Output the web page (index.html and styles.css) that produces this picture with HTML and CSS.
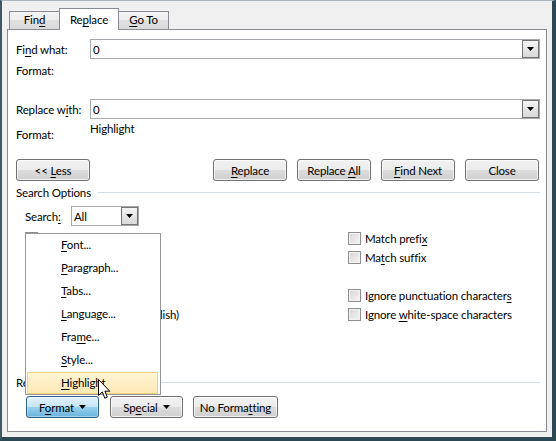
FILE: index.html
```html
<!DOCTYPE html>
<html>
<head>
<meta charset="utf-8">
<link rel="stylesheet" href="styles.css">
</head>
<body>
<div class="window">
  <div class="tabs">
    <div class="tab">Fin<u>d</u></div>
    <div class="tab active">Re<u>p</u>lace</div>
    <div class="tab"><u>G</u>o To</div>
  </div>
  <div class="panel">
    <div class="field">
      <span class="lbl">Fi<u>n</u>d what:</span>
      <div class="combo"><span class="val">0</span><span class="drop"><svg width="7" height="4" viewBox="0 0 7 4"><polygon points="0,0 7,0 3.5,4" fill="#000"/></svg></span></div>
    </div>
    <div class="fmt-row"><span class="lbl">Format:</span></div>
    <div class="field replace-field">
      <span class="lbl">Replace w<u>i</u>th:</span>
      <div class="combo"><span class="val">0</span><span class="drop"><svg width="7" height="4" viewBox="0 0 7 4"><polygon points="0,0 7,0 3.5,4" fill="#000"/></svg></span></div>
    </div>
    <div class="fmt-row2"><span class="lbl lbl-low">Format:</span><span class="fmt-val">Highlight</span></div>
    <div class="btn-row">
      <button class="btn less"><span>&lt;&lt; <u>L</u>ess</span></button>
      <button class="btn"><span><u>R</u>eplace</span></button>
      <button class="btn"><span>Replace <u>A</u>ll</span></button>
      <button class="btn"><span><u>F</u>ind Next</span></button>
      <button class="btn"><span>Close</span></button>
    </div>
    <div class="group-title"><span>Search Options</span><span class="rule"></span></div>
    <div class="search-row">
      <span class="search-lbl">Search<u>:</u></span>
      <div class="combo small"><span class="val">All</span><span class="drop"><svg width="7" height="4" viewBox="0 0 7 4"><polygon points="0,0 7,0 3.5,4" fill="#000"/></svg></span></div>
    </div>
    <div class="options">
      <div class="col">
        <div class="cb"><span class="box"></span><span class="cb-text">Matc<u>h</u> case</span></div>
        <div class="cb"><span class="box"></span><span class="cb-text">Find wh<u>o</u>le words only</span></div>
        <div class="cb"><span class="box"></span><span class="cb-text"><u>U</u>se wildcards</span></div>
        <div class="cb"><span class="box"></span><span class="cb-text">Sounds li<u>k</u>e (English)</span></div>
        <div class="cb"><span class="box"></span><span class="cb-text">Find all <u>w</u>ord forms (English)</span></div>
      </div>
      <div class="col">
        <div class="cb"><span class="box"></span><span class="cb-text">Match prefi<u>x</u></span></div>
        <div class="cb"><span class="box"></span><span class="cb-text">Ma<u>t</u>ch suffix</span></div>
        <div class="cb"></div>
        <div class="cb"><span class="box"></span><span class="cb-text">Ignore punctuation character<u>s</u></span></div>
        <div class="cb"><span class="box"></span><span class="cb-text">Ignore <u>w</u>hite-space characters</span></div>
      </div>
    </div>
    <div class="group-title replace-title"><span>Replace</span><span class="rule"></span></div>
    <div class="bottom-row">
      <button class="btn pressed fmt-btn"><span>F<u>o</u>rmat</span><svg width="7" height="4" viewBox="0 0 7 4"><polygon points="0,0 7,0 3.5,4" fill="#000"/></svg></button>
      <button class="btn special-btn"><span>Sp<u>e</u>cial</span><svg width="7" height="4" viewBox="0 0 7 4"><polygon points="0,0 7,0 3.5,4" fill="#000"/></svg></button>
      <button class="btn nofmt-btn"><span>No Forma<u>t</u>ting</span></button>
    </div>
  </div>

  <div class="menu">
    <div class="item"><u>F</u>ont...</div>
    <div class="item"><u>P</u>aragraph...</div>
    <div class="item"><u>T</u>abs...</div>
    <div class="item"><u>L</u>anguage...</div>
    <div class="item">Fra<u>m</u>e...</div>
    <div class="item"><u>S</u>tyle...</div>
    <div class="item hot"><u>H</u>ighlight</div>
  </div>

  <svg class="cursor" width="13" height="21" viewBox="0 0 13 21">
    <path d="M0.5 0.5 L0.5 16.5 L4.3 12.9 L6.8 19.2 L9.3 18.2 L6.9 12.2 L11.8 12.2 Z" fill="#fff" stroke="#000" stroke-width="1" stroke-linejoin="miter"/>
  </svg>
</div>
</body>
</html>
```

FILE: styles.css
```css
body {
  margin: 0;
  font-family: "Lato", "Noto Sans", sans-serif;
  font-size: 11.5px;
  letter-spacing: -0.15px;
  line-height: 15px;
  color: #000;
}

u {
  text-decoration-thickness: 1px;
  text-underline-offset: 2px;
}

.window {
  position: relative;
  width: 556px;
  height: 441px;
  box-sizing: border-box;
  background: #f0f0f0;
  border-style: solid;
  border-width: 1px 4px 4px 2px;
  border-color: #a9b8c0 #2b4853 #2b4853 #3d5a65;
  overflow: hidden;
}

/* tabs */
.tabs {
  display: flex;
  align-items: flex-end;
  padding: 7px 0 0 7px;
}

.tab {
  width: 51px;
  height: 18px;
  box-sizing: border-box;
  border: 1px solid #898c95;
  border-bottom: none;
  margin-right: -1px;
  background: linear-gradient(#f3f3f3 0%, #ededed 50%, #e0e0e0 50%, #d9d9d9 100%);
  text-align: center;
  line-height: 16px;
  white-space: nowrap;
}

.tab.active {
  width: 60px;
  height: 22px;
  margin-bottom: -1px;
  padding-top: 3px;
  background: #fff;
  position: relative;
  z-index: 1;
}

/* panel */
.panel {
  margin-left: 5px;
  width: 540px;
  height: 403px;
  box-sizing: border-box;
  border: 1px solid #898c95;
  background: #fff;
  padding: 9px 6px 0 8px;
}

.field {
  display: flex;
  align-items: center;
  height: 20px;
}

.lbl {
  width: 74px;
  flex: none;
  white-space: nowrap;
}

.combo {
  flex: 1;
  height: 20px;
  box-sizing: border-box;
  border: 1px solid #a7a9ae;
  display: flex;
  align-items: center;
  padding-left: 2px;
  background: #fff;
}

.combo .val {
  flex: 1;
}

.drop {
  width: 17px;
  height: 18px;
  box-sizing: border-box;
  border: 1px solid #737373;
  background: linear-gradient(#f4f4f4, #e6e6e6 50%, #d9d9d9);
  display: flex;
  align-items: center;
  justify-content: center;
  flex: none;
}

.fmt-row {
  margin-top: 4px;
  height: 15px;
  display: flex;
}

.replace-field {
  margin-top: 21px;
}

.fmt-row2 {
  margin-top: 2px;
  display: flex;
  align-items: flex-start;
}

.lbl-low {
  padding-top: 6px;
}

/* buttons */
.btn-row {
  margin-top: 17px;
  display: flex;
  gap: 10px;
  margin-right: 1px;
}

.btn {
  font-family: inherit;
  font-size: inherit;
  letter-spacing: inherit;
  line-height: 15px;
  color: #000;
  height: 22px;
  width: 74px;
  padding: 0;
  box-sizing: border-box;
  border: 1px solid #707070;
  border-radius: 3px;
  background: linear-gradient(#f2f2f2 0%, #ebebeb 50%, #dddddd 50%, #cfcfcf 100%);
  box-shadow: inset 0 0 0 1px rgba(255, 255, 255, 0.7);
  display: flex;
  align-items: center;
  justify-content: center;
  gap: 5px;
  white-space: nowrap;
}

.btn.less {
  margin-right: auto;
}

.btn.pressed {
  border-color: #2c628b;
  background: linear-gradient(#e5f4fc 0%, #c4e5f6 50%, #98d1ef 50%, #68b3db 100%);
  box-shadow: inset 0 0 0 1px rgba(255, 255, 255, 0.35);
}

.fmt-btn { width: 73px; }
.special-btn { width: 73px; }
.nofmt-btn { width: 85px; margin-left: -1px; }

/* groups */
.group-title {
  margin-top: 4px;
  display: flex;
  align-items: center;
  height: 15px;
  white-space: nowrap;
}

.rule {
  flex: 1;
  height: 1px;
  background: #d5dfe5;
  margin-left: 7px;
}

.search-row {
  margin-top: 6px;
  padding-left: 9px;
  display: flex;
  align-items: center;
  height: 20px;
}

.search-lbl {
  width: 46px;
  flex: none;
}

.combo.small {
  flex: none;
  width: 68px;
}

.options {
  margin-top: 6px;
  padding-left: 9px;
  display: grid;
  grid-template-columns: 323px 1fr;
}

.cb {
  height: 19px;
  display: flex;
  align-items: flex-start;
  white-space: nowrap;
}

.cb-text {
  margin-top: -1px;
  margin-left: 4px;
}

.box {
  width: 13px;
  height: 13px;
  box-sizing: border-box;
  border: 1px solid #8e8f8f;
  background: linear-gradient(135deg, #d6d6d6, #f6f6f6);
  box-shadow: inset 0 0 0 1px #f2f2f2;
  flex: none;
}

.replace-title {
  margin-top: 48px;
}

.bottom-row {
  margin-top: 6px;
  padding-left: 10px;
  display: flex;
  gap: 11px;
}

/* popup menu */
.menu {
  position: absolute;
  left: 23px;
  top: 232px;
  width: 136px;
  box-sizing: border-box;
  border: 1px solid #979797;
  background: #fff;
  z-index: 5;
  display: flex;
  flex-direction: column;
  gap: 1px;
}

.item {
  height: 22px;
  box-sizing: border-box;
  margin: 0 2px 0 1px;
  padding-left: 33px;
  line-height: 20px;
  border: 1px solid transparent;
  white-space: nowrap;
}

.item.hot {
  border-color: #f1d27a;
  background: linear-gradient(#fff4d4, #fde9b5);
}

.cursor {
  position: absolute;
  left: 96px;
  top: 378px;
  z-index: 6;
}
```
